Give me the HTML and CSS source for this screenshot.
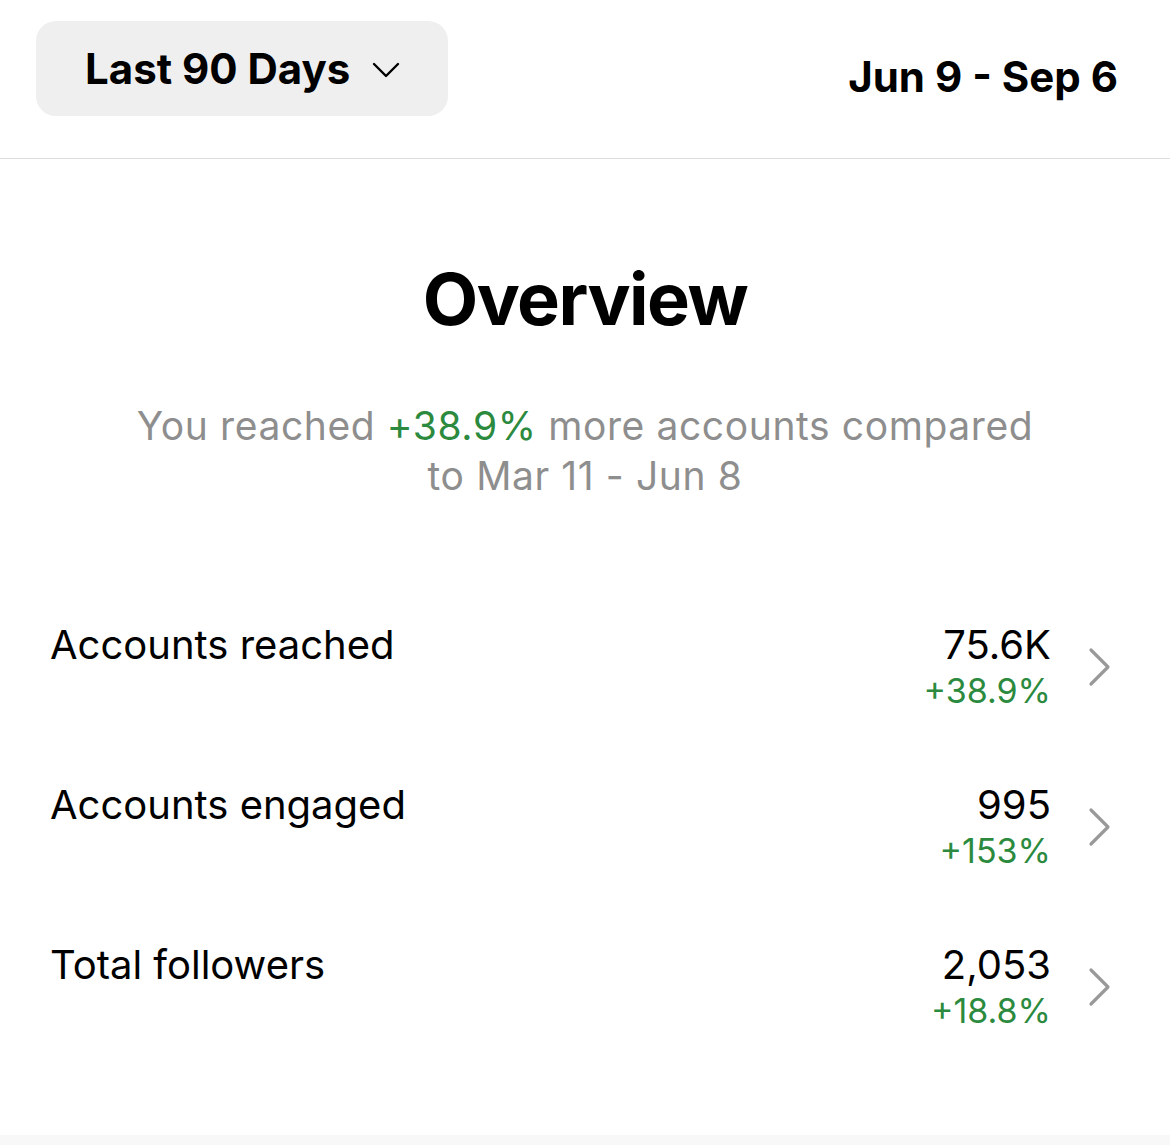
FILE: index.html
```html
<!DOCTYPE html>
<html>
<head>
  <meta charset="UTF-8">
  <title>Insights</title>
  <link rel="stylesheet" href="styles.css">
</head>
<body>
  <div class="page">
    <div class="header">
      <div class="range-btn">
        <span>Last 90 Days</span>
        <svg class="caret" width="28" height="18" viewBox="0 0 28 18">
          <path d="M2 3 L14 15 L26 3" fill="none" stroke="#000" stroke-width="2.4" stroke-linecap="round" stroke-linejoin="round"/>
        </svg>
      </div>
      <div class="date-range">Jun 9 - Sep 6</div>
    </div>

    <div class="overview">
      <h1>Overview</h1>
      <p class="summary">You reached <span class="up">+38.9%</span> more accounts compared<br>to Mar 11 - Jun 8</p>
    </div>

    <ul class="stats">
      <li class="stat-row">
        <div class="stat-label">Accounts reached</div>
        <div class="stat-value">
          <div class="num">75.6K</div>
          <div class="up pct">+38.9%</div>
        </div>
        <svg class="chev" width="24" height="40" viewBox="0 0 24 40">
          <path d="M3 3 L20 20 L3 37" fill="none" stroke="#999" stroke-width="3.2" stroke-linecap="round" stroke-linejoin="round"/>
        </svg>
      </li>
      <li class="stat-row">
        <div class="stat-label">Accounts engaged</div>
        <div class="stat-value">
          <div class="num">995</div>
          <div class="up pct">+153%</div>
        </div>
        <svg class="chev" width="24" height="40" viewBox="0 0 24 40">
          <path d="M3 3 L20 20 L3 37" fill="none" stroke="#999" stroke-width="3.2" stroke-linecap="round" stroke-linejoin="round"/>
        </svg>
      </li>
      <li class="stat-row">
        <div class="stat-label">Total followers</div>
        <div class="stat-value">
          <div class="num">2,053</div>
          <div class="up pct">+18.8%</div>
        </div>
        <svg class="chev" width="24" height="40" viewBox="0 0 24 40">
          <path d="M3 3 L20 20 L3 37" fill="none" stroke="#999" stroke-width="3.2" stroke-linecap="round" stroke-linejoin="round"/>
        </svg>
      </li>
    </ul>
  </div>
  <div class="next-section"></div>
</body>
</html>
```

FILE: styles.css
```css
/* Insights overview */
body {
  margin: 0;
  font-family: Inter, "Noto Sans", sans-serif;
  color: #000;
  background-color: #fff;
}

.page {
  height: 1135px;
}

/* Cabecera con el rango de fechas */
.header {
  display: flex;
  justify-content: space-between;
  align-items: flex-start;
  height: 159px;
  padding: 21px 52px 0 36px;
  box-sizing: border-box;
  border-bottom: 1px solid #dedede;
}

.range-btn {
  display: flex;
  align-items: center;
  gap: 22px;
  width: 412px;
  height: 95px;
  padding-left: 49px;
  box-sizing: border-box;
  background-color: #efefef;
  border-radius: 20px;
  font-size: 42px;
  font-weight: 700;
}

.caret {
  margin-top: 2px;
}

.date-range {
  margin-top: 30px;
  font-size: 42px;
  font-weight: 700;
}

/* Resumen */
.overview {
  text-align: center;
  padding-top: 94px;
}

.overview h1 {
  margin: 0;
  font-size: 72px;
  line-height: 92px;
  font-weight: 700;
  letter-spacing: -1.5px;
}

.summary {
  margin: 56px 0 0;
  font-size: 39px;
  line-height: 50px;
  letter-spacing: 0.6px;
  color: #8e8e8e;
}

.up {
  color: #2b8a3e;
}

/* Filas de estadisticas */
.stats {
  list-style-type: none;
  margin: 86px 0 0;
  padding: 0;
}

.stat-row {
  display: flex;
  align-items: center;
  height: 160px;
  padding: 0 58px 0 50px;
  box-sizing: border-box;
}

.stat-label {
  flex: 1;
  align-self: flex-start;
  padding-top: 34px;
  font-size: 40px;
  line-height: 48px;
}

.stat-value {
  text-align: right;
  margin-right: 37px;
}

.num {
  font-size: 40px;
  line-height: 48px;
}

.pct {
  font-size: 34px;
  line-height: 44px;
}

.next-section {
  height: 10px;
  background-color: #f8f8f8;
}
```
